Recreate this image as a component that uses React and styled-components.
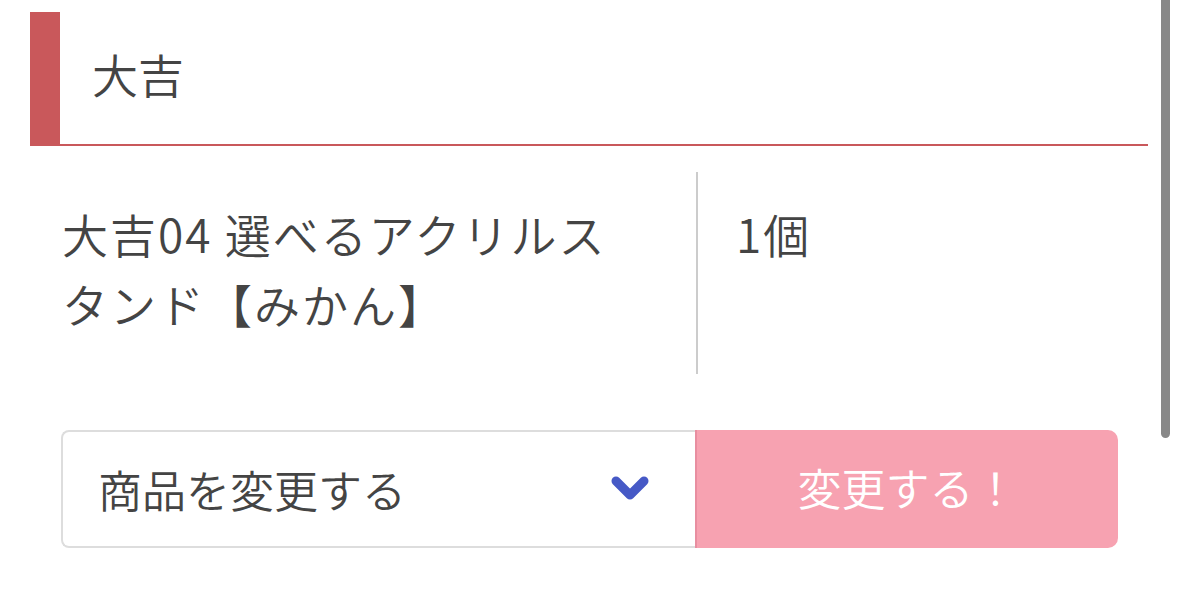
import styled, { createGlobalStyle } from "styled-components";

const GlobalStyle = createGlobalStyle`
  html, body {
    margin: 0;
    padding: 0;
    background: #fff;
  }
  body {
    font-family: "Noto Sans CJK JP", "Noto Sans", sans-serif;
    font-weight: 350;
    color: #444;
  }
`;

const Page = styled.div`
  position: relative;
  width: 1178px;
  height: 603px;
  overflow: hidden;
  padding-top: 12px;
  box-sizing: border-box;
`;

const Section = styled.section`
  margin: 0 30px;
`;

const Heading = styled.h2`
  margin: 0;
  padding: 38px 32px 48px;
  border-left: 30px solid #c9585b;
  border-bottom: 2px solid #c9585b;
  font-size: 46px;
  line-height: 46px;
  font-weight: 350;
  color: #444;
`;

const Row = styled.div`
  display: flex;
  margin-top: 26px;
`;

const Cell = styled.div`
  font-size: 46px;
  line-height: 70px;
  letter-spacing: 2px;
  padding: ${(p) => (p.$main ? "26px 60px 36px 32px" : "26px 32px 36px 38px")};
  ${(p) => (p.$main ? "width: 668px; box-sizing: border-box; border-right: 2px solid #ccc;" : "flex: 1;")}
`;

const Form = styled.div`
  display: flex;
  margin: 56px 0 0 61px;
  height: 118px;
`;

const Select = styled.div`
  flex: 0 0 634px;
  box-sizing: border-box;
  display: flex;
  align-items: center;
  justify-content: space-between;
  padding: 0 45px 0 35px;
  border: 2px solid #ddd;
  border-right: none;
  border-radius: 8px 0 0 8px;
  font-size: 44px;
  color: #444;
`;

const Button = styled.button`
  flex: 0 0 423px;
  border: none;
  border-left: 2px solid #e88ea0;
  border-radius: 0 10px 10px 0;
  background: #f7a2b1;
  color: #fff;
  font-family: inherit;
  font-weight: 350;
  font-size: 44px;
  padding: 0 0 4px;
`;

const Scrollbar = styled.div`
  position: absolute;
  top: -10px;
  right: 8px;
  width: 9px;
  height: 448px;
  border-radius: 5px;
  background: #888;
`;

function Chevron() {
  return (
    <svg width="40" height="28" viewBox="0 0 40 28">
      <path
        d="M6 6 L20 20 L34 6"
        fill="none"
        stroke="#4659c6"
        strokeWidth="9"
        strokeLinecap="round"
        strokeLinejoin="round"
      />
    </svg>
  );
}

export default function App() {
  return (
    <>
      <GlobalStyle />
      <Page>
        <Section>
          <Heading>大吉</Heading>
          <Row>
            <Cell $main>大吉04 選べるアクリルスタンド【みかん】</Cell>
            <Cell>1個</Cell>
          </Row>
        </Section>
        <Form>
          <Select>
            <span>商品を変更する</span>
            <Chevron />
          </Select>
          <Button>変更する！</Button>
        </Form>
        <Scrollbar />
      </Page>
    </>
  );
}
